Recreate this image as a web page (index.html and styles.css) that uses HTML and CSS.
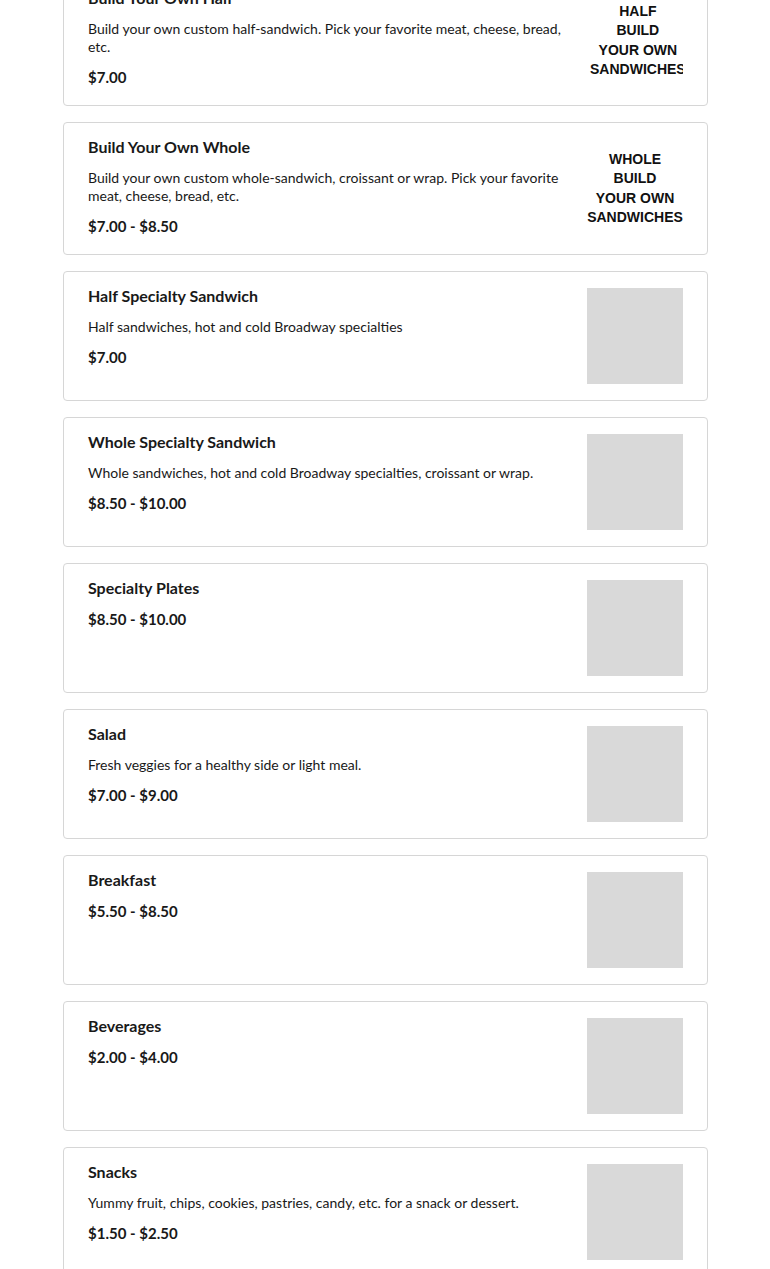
FILE: index.html
```html
<!DOCTYPE html>
<html lang="en">
<head>
<meta charset="utf-8">
<title>Menu</title>
<link rel="stylesheet" href="styles.css">
</head>
<body>
<main class="menu">
  <article class="card">
    <div class="info">
      <h3 class="title">Build Your Own Half</h3>
      <p class="desc">Build your own custom half-sandwich. Pick your favorite meat, cheese, bread, etc.</p>
      <p class="price">$7.00</p>
    </div>
    <div class="thumb label half"><span>HALF<br>BUILD<br>YOUR OWN<br>SANDWICHES</span></div>
  </article>
  <article class="card">
    <div class="info">
      <h3 class="title">Build Your Own Whole</h3>
      <p class="desc">Build your own custom whole-sandwich, croissant or wrap. Pick your favorite meat, cheese, bread, etc.</p>
      <p class="price">$7.00 - $8.50</p>
    </div>
    <div class="thumb label"><span>WHOLE<br>BUILD<br>YOUR OWN<br>SANDWICHES</span></div>
  </article>
  <article class="card">
    <div class="info">
      <h3 class="title">Half Specialty Sandwich</h3>
      <p class="desc">Half sandwiches, hot and cold Broadway specialties</p>
      <p class="price">$7.00</p>
    </div>
    <div class="thumb placeholder"></div>
  </article>
  <article class="card">
    <div class="info">
      <h3 class="title">Whole Specialty Sandwich</h3>
      <p class="desc">Whole sandwiches, hot and cold Broadway specialties, croissant or wrap.</p>
      <p class="price">$8.50 - $10.00</p>
    </div>
    <div class="thumb placeholder"></div>
  </article>
  <article class="card">
    <div class="info">
      <h3 class="title">Specialty Plates</h3>
      <p class="price">$8.50 - $10.00</p>
    </div>
    <div class="thumb placeholder"></div>
  </article>
  <article class="card">
    <div class="info">
      <h3 class="title">Salad</h3>
      <p class="desc">Fresh veggies for a healthy side or light meal.</p>
      <p class="price">$7.00 - $9.00</p>
    </div>
    <div class="thumb placeholder"></div>
  </article>
  <article class="card">
    <div class="info">
      <h3 class="title">Breakfast</h3>
      <p class="price">$5.50 - $8.50</p>
    </div>
    <div class="thumb placeholder"></div>
  </article>
  <article class="card">
    <div class="info">
      <h3 class="title">Beverages</h3>
      <p class="price">$2.00 - $4.00</p>
    </div>
    <div class="thumb placeholder"></div>
  </article>
  <article class="card">
    <div class="info">
      <h3 class="title">Snacks</h3>
      <p class="desc">Yummy fruit, chips, cookies, pastries, candy, etc. for a snack or dessert.</p>
      <p class="price">$1.50 - $2.50</p>
    </div>
    <div class="thumb placeholder"></div>
  </article>
</main>
</body>
</html>
```
FILE: styles.css
```css
html, body {
  margin: 0;
  padding: 0;
  background: #ffffff;
}

body {
  font-family: "Lato", "Noto Sans", sans-serif;
  color: #191919;
}

.menu {
  display: flex;
  flex-direction: column;
  gap: 16px;
  padding: 0 62px 0 63px;
  margin-top: -27px;
}

.card {
  display: flex;
  gap: 16px;
  border: 1px solid #d6d6d6;
  border-radius: 4px;
  padding: 16px 24px;
  background: #fff;
}

.info {
  flex: 1;
  min-width: 0;
}

.title {
  margin: 0 0 14px;
  font-size: 16px;
  line-height: 16px;
  font-weight: 700;
}

.desc {
  margin: 0 0 9px;
  font-size: 14px;
  line-height: 18px;
  font-weight: 400;
}

.price {
  margin: 0;
  font-size: 15px;
  line-height: 24px;
  font-weight: 700;
}

.title + .price {
  margin-top: -3px;
}

.thumb {
  flex: 0 0 96px;
  width: 96px;
  height: 96px;
}

.placeholder {
  background: #d9d9d9;
}

.label {
  display: flex;
  align-items: center;
  justify-content: center;
  overflow: hidden;
  align-self: center;
  font-family: "Liberation Sans", Arial, sans-serif;
  font-weight: 700;
  font-size: 14px;
  line-height: 19.5px;
  text-align: center;
  color: #111;
  white-space: nowrap;
}

.label.half {
  justify-content: flex-start;
  padding: 2px 0 0 3px;
  box-sizing: border-box;
}
```
